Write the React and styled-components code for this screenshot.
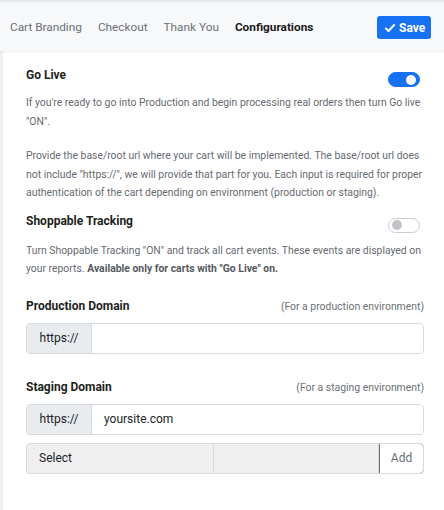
import styled, { createGlobalStyle } from 'styled-components';
import { useState } from 'react';

const GlobalStyle = createGlobalStyle`
  html, body {
    margin: 0;
    padding: 0;
    background: #ffffff;
    font-family: Roboto, "Liberation Sans", sans-serif;
  }
  * { box-sizing: border-box; }
`;

const CheckIcon = () => (
  <svg width="12" height="12" viewBox="0 0 16 16" fill="none">
    <path d="M2.5 8.5l3.5 3.5 7.5-8" stroke="#fff" strokeWidth="2.6" strokeLinecap="round" strokeLinejoin="round" />
  </svg>
);

const App = () => {
  const [goLive, setGoLive] = useState(true);
  const [tracking, setTracking] = useState(false);
  const [prod, setProd] = useState('');
  const [staging, setStaging] = useState('yoursite.com');

  return (
    <Page>
      <GlobalStyle />
      <TopBar>
        <Tabs>
          <Tab>Cart Branding</Tab>
          <Tab>Checkout</Tab>
          <Tab>Thank You</Tab>
          <Tab $active>Configurations</Tab>
        </Tabs>
        <SaveButton><CheckIcon />Save</SaveButton>
      </TopBar>
      <Panel>
        <TitleRow>
          <Title>Go Live</Title>
          <Toggle $on={goLive} onClick={() => setGoLive(!goLive)} />
        </TitleRow>
        <Text $top={7}>If you're ready to go into Production and begin processing real orders then turn Go live "ON".</Text>
        <Text $top={16}>
          Provide the base/root url where your cart will be implemented. The base/root url does not include "https://", we will provide that part for you. Each input is required for proper authentication of the cart depending on environment (production or staging).
        </Text>
        <TitleRow $top={10}>
          <Title>Shoppable Tracking</Title>
          <Toggle $on={tracking} onClick={() => setTracking(!tracking)} />
        </TitleRow>
        <Text $top={9}>Turn Shoppable Tracking "ON" and track all cart events. These events are displayed on your reports. <b>Available only for carts with "Go Live" on.</b></Text>
        <FieldHead $top={19}>
          <Title>Production Domain</Title>
          <Hint>(For a production environment)</Hint>
        </FieldHead>
        <InputGroup>
          <Prefix>https://</Prefix>
          <Input value={prod} onChange={e => setProd(e.target.value)} />
        </InputGroup>
        <FieldHead $top={25}>
          <Title>Staging Domain</Title>
          <Hint>(For a staging environment)</Hint>
        </FieldHead>
        <InputGroup>
          <Prefix>https://</Prefix>
          <Input value={staging} onChange={e => setStaging(e.target.value)} />
        </InputGroup>
        <SelectRow>
          <SelectCell>Select</SelectCell>
          <SelectCell $empty />
          <AddButton>Add</AddButton>
        </SelectRow>
      </Panel>
    </Page>
  );
};

export default App;

const Page = styled.div`
  width: 444px;
  min-height: 510px;
  background: #eef0f2;
  display: flex;
  flex-direction: column;
`;

const TopBar = styled.div`
  height: 51px;
  background: #f7f8fa;
  border-top: 2px solid #e6e7e9;
  display: flex;
  align-items: center;
  justify-content: space-between;
  padding: 0 13px 0 10px;
  box-shadow: 0 1px 2px rgba(0, 0, 0, 0.08);
  position: relative;
  z-index: 1;
`;

const Tabs = styled.div`
  display: flex;
  gap: 16px;
`;

const Tab = styled.span`
  font-size: 11.8px;
  color: ${p => (p.$active ? '#1b1b1b' : '#6c7075')};
  font-weight: ${p => (p.$active ? 700 : 400)};
`;

const SaveButton = styled.button`
  display: flex;
  align-items: center;
  gap: 3px;
  height: 23px;
  width: 54px;
  padding: 0 0 0 7px;
  background: #1672f3;
  border: none;
  border-radius: 3px;
  color: #fff;
  font-family: Roboto, "Liberation Sans", sans-serif;
  font-size: 12px;
  font-weight: 700;
  margin-top: 2px;
`;

const Panel = styled.div`
  flex: 1;
  margin-left: 3px;
  background: #fff;
  padding: 16px 20px 30px 23px;
  display: flex;
  flex-direction: column;
`;

const TitleRow = styled.div`
  display: flex;
  justify-content: space-between;
  align-items: flex-start;
  margin-top: ${p => p.$top || 0}px;
`;

const Title = styled.div`
  font-size: 12px;
  line-height: 16px;
  font-weight: 700;
  color: #1d1f21;
`;

const Text = styled.p`
  margin: ${p => p.$top}px 0 0;
  font-size: 10.4px;
  line-height: 18.5px;
  color: #666a70;
  b { font-weight: 700; color: #55595e; }
`;

const Toggle = styled.div`
  width: 32px;
  height: 15px;
  margin-top: 5px;
  margin-right: 4px;
  border-radius: 8px;
  position: relative;
  cursor: pointer;
  background: ${p => (p.$on ? '#1672f3' : '#fff')};
  border: 1px solid ${p => (p.$on ? '#1672f3' : '#c9ccd0')};
  &::after {
    content: '';
    position: absolute;
    top: 1.5px;
    left: ${p => (p.$on ? '17px' : '3px')};
    width: 10px;
    height: 10px;
    border-radius: 50%;
    background: ${p => (p.$on ? '#fff' : '#c0c3c7')};
  }
`;

const FieldHead = styled.div`
  display: flex;
  justify-content: space-between;
  align-items: baseline;
  margin: ${p => p.$top}px 0 9px;
`;

const Hint = styled.span`
  font-size: 10.4px;
  color: #6c7075;
`;

const InputGroup = styled.div`
  display: flex;
  height: 31px;
  border: 1px solid #d6d9dd;
  border-radius: 4px;
  overflow: hidden;
`;

const Prefix = styled.span`
  width: 65px;
  display: flex;
  align-items: center;
  justify-content: center;
  background: #e9ecef;
  border-right: 1px solid #d6d9dd;
  font-size: 12px;
  color: #212529;
`;

const Input = styled.input`
  flex: 1;
  border: none;
  outline: none;
  padding: 0 12px;
  font-family: Roboto, "Liberation Sans", sans-serif;
  font-size: 12px;
  color: #212529;
`;

const SelectRow = styled.div`
  display: flex;
  height: 31px;
  margin-top: 8px;
  border: 1px solid #d6d9dd;
  border-radius: 4px;
  background: #efefef;
  overflow: hidden;
`;

const SelectCell = styled.div`
  width: ${p => (p.$empty ? '165px' : '187px')};
  display: flex;
  align-items: center;
  padding-left: 12px;
  font-size: 12px;
  color: #212529;
  border-right: 1px solid #dcdcdc;
`;

const AddButton = styled.button`
  flex: 1;
  background: #fff;
  border: 1px solid #6c7075;
  border-radius: 0 4px 4px 0;
  margin: -1px -1px -1px 0;
  font-family: Roboto, "Liberation Sans", sans-serif;
  font-size: 12px;
  color: #6c7075;
`;
